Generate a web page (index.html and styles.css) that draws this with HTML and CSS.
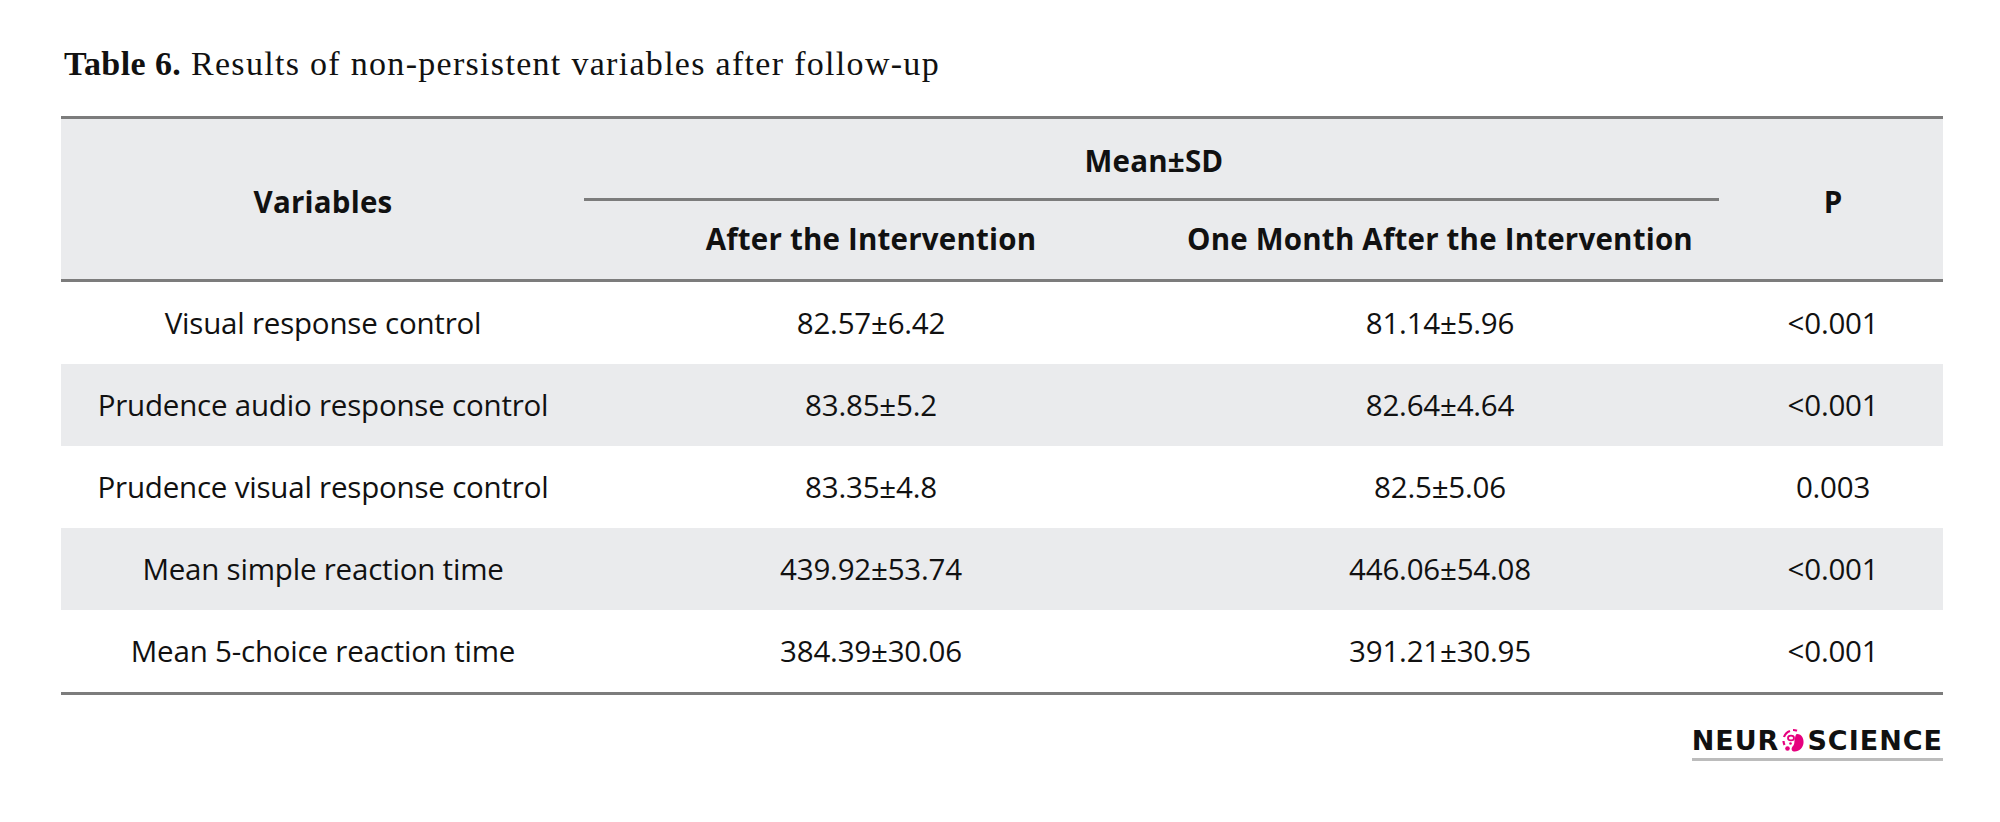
FILE: index.html
```html
<!DOCTYPE html>
<html>
<head>
<meta charset="utf-8">
<link rel="stylesheet" href="styles.css">
</head>
<body>
<div class="page">
  <p class="caption"><b>Table 6.</b> Results of non-persistent variables after follow-up</p>
  <table class="data">
    <colgroup>
      <col class="c1"><col class="c2"><col class="c3"><col class="c4">
    </colgroup>
    <thead>
      <tr class="h1">
        <th rowspan="2" class="side">Variables</th>
        <th colspan="2" class="group">Mean±SD</th>
        <th rowspan="2" class="side">P</th>
      </tr>
      <tr class="h2">
        <th>After the Intervention</th>
        <th>One Month After the Intervention</th>
      </tr>
    </thead>
    <tbody>
      <tr><td>Visual response control</td><td>82.57±6.42</td><td>81.14±5.96</td><td>&lt;0.001</td></tr>
      <tr class="alt"><td>Prudence audio response control</td><td>83.85±5.2</td><td>82.64±4.64</td><td>&lt;0.001</td></tr>
      <tr><td>Prudence visual response control</td><td>83.35±4.8</td><td>82.5±5.06</td><td>0.003</td></tr>
      <tr class="alt"><td>Mean simple reaction time</td><td>439.92±53.74</td><td>446.06±54.08</td><td>&lt;0.001</td></tr>
      <tr><td>Mean 5-choice reaction time</td><td>384.39±30.06</td><td>391.21±30.95</td><td>&lt;0.001</td></tr>
    </tbody>
  </table>
  <div class="footer">
    <div class="logo">
      <span class="word">NEUR</span>
      <svg class="neuron" width="24" height="30" viewBox="0 0 24 30">
        <path d="M3 11 A10 10 0 0 1 9 5" fill="none" stroke="#e6007e" stroke-width="2.2"/>
        <path d="M12 4 A10 10 0 0 1 16 4.8" fill="none" stroke="#e6007e" stroke-width="2.2"/>
        <path d="M2.5 15 A10 10 0 0 0 3.5 19" fill="none" stroke="#e6007e" stroke-width="2.2"/>
        <ellipse cx="10" cy="12" rx="3" ry="2.4" fill="none" stroke="#e6007e" stroke-width="1.8"/>
        <path d="M16 8 C21 8 23 13 22.5 17 C22 22 18 26 13 25.5 C10 25 10 22 12 20 C14 18 13 15 14 12 C14.5 9.5 15 8 16 8 Z" fill="#e6007e"/>
        <circle cx="6.5" cy="22.5" r="2.3" fill="#e6007e"/>
        <circle cx="9.5" cy="17.5" r="1.3" fill="#e6007e"/>
      </svg>
      <span class="word">SCIENCE</span>
    </div>
  </div>
</div>
</body>
</html>
```
FILE: styles.css
```css
html, body {
  margin: 0;
  padding: 0;
  background: #ffffff;
}
.page {
  width: 2000px;
  height: 822px;
  padding-left: 61px;
  box-sizing: border-box;
}
.caption {
  margin: 0;
  padding-top: 46px;
  padding-left: 3px;
  height: 116px;
  box-sizing: border-box;
  font-family: "Liberation Serif", serif;
  font-size: 34px;
  line-height: 36px;
  letter-spacing: 1.3px;
  color: #111;
}
.caption b {
  font-weight: bold;
  letter-spacing: 0.4px;
}
.data {
  width: 1882px;
  border-collapse: collapse;
  table-layout: fixed;
  font-family: "Open Sans", sans-serif;
  color: #111;
  border-top: 3px solid #7c7c7c;
  border-bottom: 3px solid #7c7c7c;
}
.c1 { width: 524px; }
.c2 { width: 572px; }
.c3 { width: 566px; }
.c4 { width: 220px; }
.data thead {
  background: #eaebed;
  border-bottom: 3px solid #7c7c7c;
}
.data th {
  font-weight: 700;
  font-size: 29.5px;
  letter-spacing: 0.2px;
  text-align: center;
  padding: 0;
}
.data th.side {
  padding-top: 6px;
}
.h1 th {
  height: 81px;
}
.h1 th.group {
  vertical-align: bottom;
  padding-bottom: 18px;
  box-sizing: border-box;
  position: relative;
}
.h1 th.group::after {
  content: "";
  position: absolute;
  left: -1px;
  right: 4px;
  bottom: -2px;
  height: 3px;
  background: #7c7c7c;
}
.h2 th {
  height: 80px;
}
.data td {
  height: 82px;
  padding: 0;
  text-align: center;
  font-size: 29.5px;
  letter-spacing: -0.2px;
}
.data tr.alt td {
  background: #eaebed;
}
.footer {
  width: 1882px;
  display: flex;
  justify-content: flex-end;
  padding-top: 30px;
}
.logo {
  display: flex;
  align-items: center;
  gap: 2px;
  border-bottom: 3px solid #bcbcbc;
  padding-bottom: 1px;
}
.logo .word {
  font-family: "DejaVu Sans", sans-serif;
  font-weight: bold;
  font-size: 27px;
  letter-spacing: 1px;
  color: #111;
  line-height: 32px;
}
.neuron {
  display: block;
}
```
